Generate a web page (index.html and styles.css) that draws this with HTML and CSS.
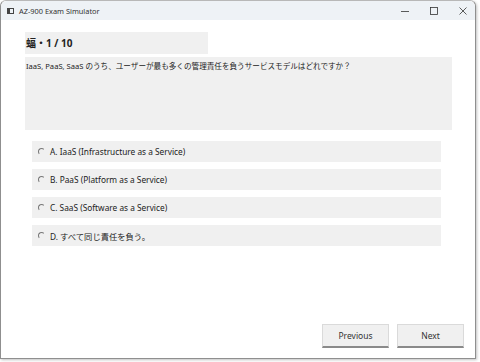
FILE: index.html
```html
<!DOCTYPE html>
<html lang="ja">
  <head>
    <meta charset="UTF-8" />
    <title>AZ-900 Exam Simulator</title>
    <link rel="stylesheet" href="styles.css">
  </head>
  <body>
    <section class="window">
      <header class="titlebar">
        <span class="appicon"></span>
        <span class="title">AZ-900 Exam Simulator</span>
        <span class="controls">
          <svg width="10" height="10" viewBox="0 0 10 10"><path d="M1 5.5h8" stroke="#333" stroke-width="0.8"/></svg>
          <svg width="10" height="10" viewBox="0 0 10 10"><rect x="1.5" y="1.5" width="7" height="7" fill="none" stroke="#333" stroke-width="0.8"/></svg>
          <svg width="10" height="10" viewBox="0 0 10 10"><path d="M1.5 1.5l7 7M8.5 1.5l-7 7" stroke="#333" stroke-width="0.8"/></svg>
        </span>
      </header>

      <main class="content">
        <h1 class="counter">蝠・1 / 10</h1>
        <p class="question">IaaS, PaaS, SaaS のうち、ユーザーが最も多くの管理責任を負うサービスモデルはどれですか？</p>

        <div class="options">
          <label class="option"><span class="radio"></span>A. IaaS (Infrastructure as a Service)</label>
          <label class="option"><span class="radio"></span>B. PaaS (Platform as a Service)</label>
          <label class="option"><span class="radio"></span>C. SaaS (Software as a Service)</label>
          <label class="option"><span class="radio"></span>D. すべて同じ責任を負う。</label>
        </div>

        <nav class="buttons">
          <button>Previous</button>
          <button>Next</button>
        </nav>
      </main>
    </section>
  </body>
</html>
```

FILE: styles.css
```css
* {
  margin: 0;
  box-sizing: border-box;
  font-family: "Noto Sans", "Noto Sans CJK JP", sans-serif;
  --bar: #eef2f6;
  --box: #f0f0f0;
  --text: #222;
}

body {
  background-color: #fff;
  width: 480px;
  height: 362px;
  overflow: hidden;
}

.window {
  width: 476px;
  height: 359px;
  border: 1px solid #8f8f8f;
  border-top-color: #b8b8b8;
  border-radius: 6px 6px 0 0;
  display: flex;
  flex-direction: column;
  background-color: #fff;
  box-shadow: 1px 1px 3px rgba(0, 0, 0, 0.25);
}

.titlebar {
  height: 19px;
  background-color: var(--bar);
  display: flex;
  align-items: center;
  padding-left: 6px;
  border-radius: 6px 6px 0 0;
}

.appicon {
  width: 7px;
  height: 6px;
  border: 1px solid #444;
  border-left-width: 3px;
  margin-right: 5px;
}

.title {
  font-size: 7.4px;
  color: #333;
  flex: 1;
}

.controls {
  display: flex;
  gap: 19px;
  padding-right: 7px;
}

.content {
  flex: 1;
  display: flex;
  flex-direction: column;
  padding: 12px 23px 0 24px;
}

.counter {
  width: 183px;
  height: 22px;
  background-color: var(--box);
  font-size: 10px;
  font-weight: bold;
  color: var(--text);
  padding: 3px 0 0 1px;
}

.question {
  margin-top: 3px;
  height: 73px;
  background-color: var(--box);
  font-size: 7.6px;
  color: var(--text);
  padding: 3px 0 0 1px;
}

.options {
  display: flex;
  flex-direction: column;
  gap: 7px;
  margin: 11px 11px 0 7px;
}

.option {
  height: 21px;
  background-color: var(--box);
  display: flex;
  align-items: center;
  font-size: 8.3px;
  color: var(--text);
  padding-left: 6px;
}

.radio {
  width: 7px;
  height: 7px;
  border-radius: 50%;
  border: 1px solid #777;
  border-right-color: transparent;
  border-bottom-color: transparent;
  margin-right: 5px;
}

.buttons {
  margin: auto -12px 10px 0;
  display: flex;
  justify-content: flex-end;
  gap: 8px;
}

button {
  width: 67px;
  height: 24px;
  background-color: var(--box);
  border: 1px solid #dadada;
  border-bottom: 2px solid #8a8a8a;
  font-size: 8.5px;
  color: #333;
}
```
